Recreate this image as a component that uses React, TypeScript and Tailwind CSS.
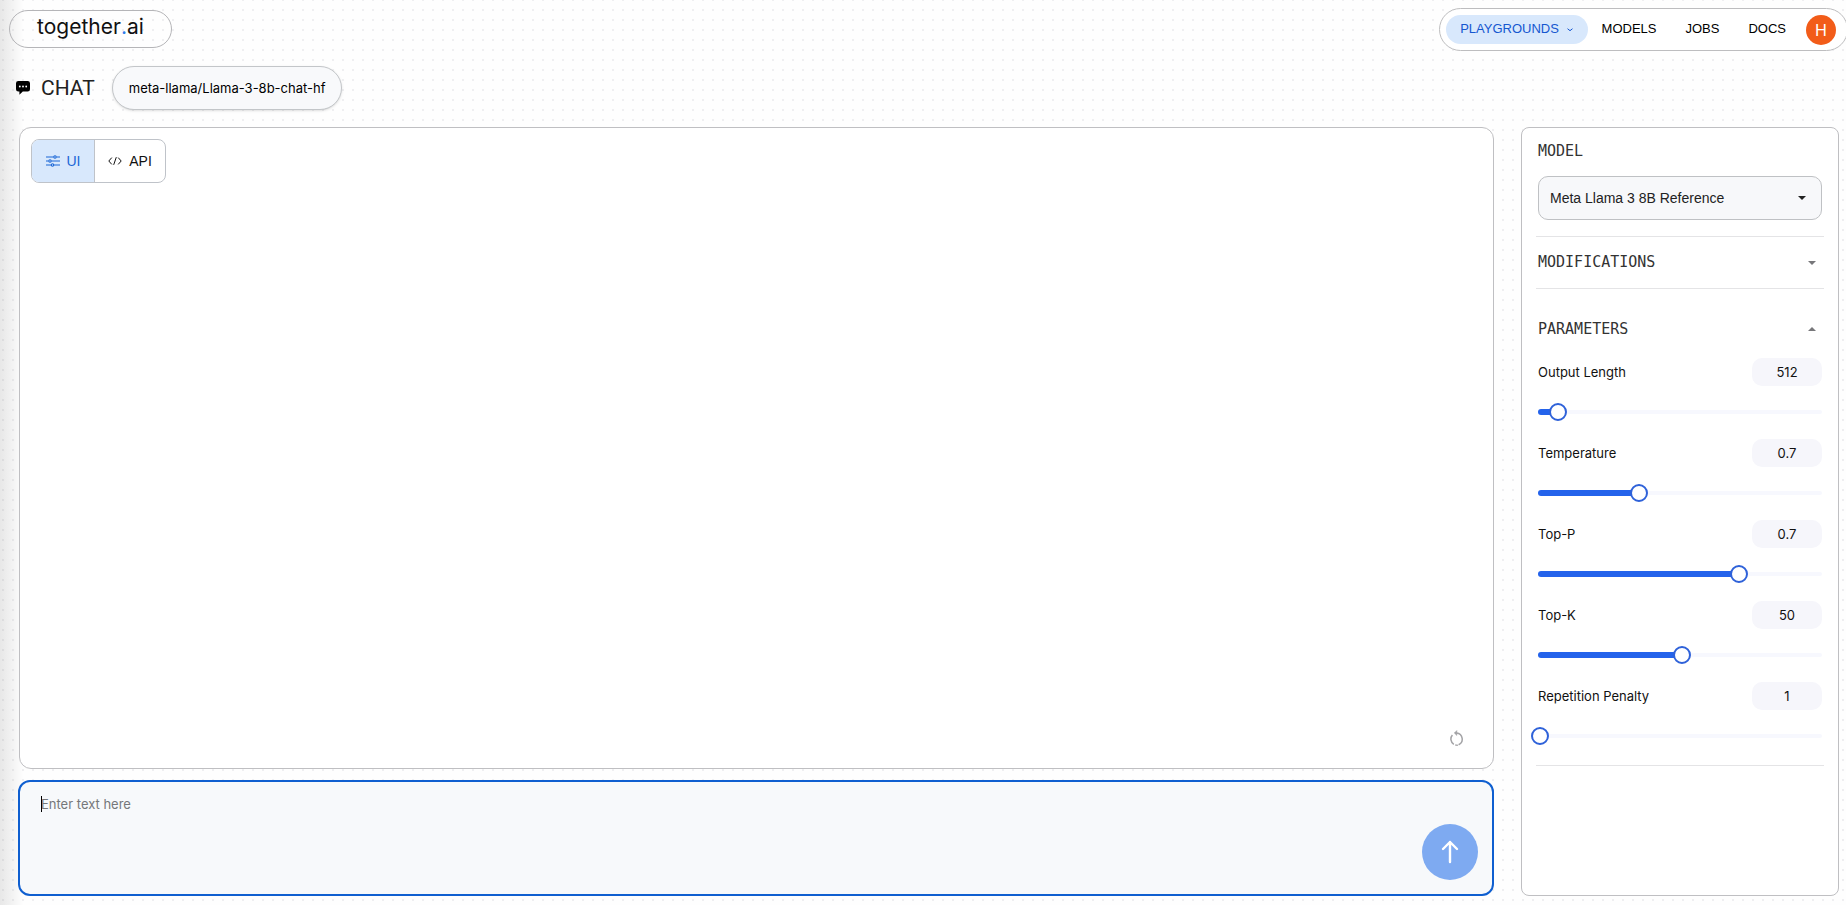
import { useState } from "react";

type Parameter = {
  id: string;
  label: string;
  value: number;
  min: number;
  max: number;
  step: number;
};

const initialParameters: Parameter[] = [
  { id: "output-length", label: "Output Length", value: 512, min: 0, max: 8192, step: 1 },
  { id: "temperature", label: "Temperature", value: 0.7, min: 0, max: 2, step: 0.1 },
  { id: "top-p", label: "Top-P", value: 0.7, min: 0, max: 1, step: 0.1 },
  { id: "top-k", label: "Top-K", value: 50, min: 0, max: 100, step: 1 },
  { id: "repetition-penalty", label: "Repetition Penalty", value: 1, min: 1, max: 2, step: 0.1 }
];

const navLinks = ["MODELS", "JOBS", "DOCS"];

function ChatIcon() {
  return (
    <svg viewBox="0 0 14 14" className="h-[14px] w-[14px] shrink-0" aria-hidden="true">
      <path d="M2.3 0h9.4A2.3 2.3 0 0 1 14 2.3v6A2.3 2.3 0 0 1 11.7 10.6H6.8L3.4 13.8v-3.2H2.3A2.3 2.3 0 0 1 0 8.3v-6A2.3 2.3 0 0 1 2.3 0Z" fill="#000" />
      <circle cx="3.8" cy="5.5" r="0.9" fill="#fff" />
      <circle cx="7" cy="5.5" r="0.9" fill="#fff" />
      <circle cx="10.2" cy="5.5" r="0.9" fill="#fff" />
    </svg>
  );
}

function SlidersIcon() {
  return (
    <svg viewBox="0 0 14 12" className="h-3 w-[14px]" fill="none" stroke="currentColor" strokeWidth="1.1" aria-hidden="true">
      <path d="M0 2h7.6M10.4 2H14M0 6h2.6M5.4 6H14M0 10h5.1M7.9 10H14" />
      <circle cx="9" cy="2" r="1.2" />
      <circle cx="4" cy="6" r="1.2" />
      <circle cx="6.5" cy="10" r="1.2" />
    </svg>
  );
}

function CodeIcon() {
  return (
    <svg viewBox="0 0 14 10" className="h-[10px] w-[14px]" fill="none" stroke="currentColor" strokeWidth="1" aria-hidden="true">
      <path d="M3.8 1.6.8 5l3 3.4M10.2 1.6l3 3.4-3 3.4M8.3 1.2 5.7 8.8" />
    </svg>
  );
}

function Caret({ up = false }: { up?: boolean }) {
  return (
    <svg viewBox="0 0 8 4" className="h-1 w-2" fill="currentColor" aria-hidden="true">
      <path d={up ? "M0 4 4 0l4 4Z" : "M0 0h8L4 4Z"} />
    </svg>
  );
}

function ParameterSlider({ parameter, onChange }: { parameter: Parameter; onChange: (value: number) => void }) {
  const { id, label, value, min, max, step } = parameter;
  const percent = ((value - min) / (max - min)) * 100;

  return (
    <div className="h-[81px] text-[13px]">
      <div className="flex items-center justify-between">
        <label htmlFor={id}>{label}</label>
        <input
          type="text"
          aria-label={`${label} value`}
          value={value}
          onChange={(event) => onChange(Number(event.target.value) || min)}
          className="h-7 w-[70px] rounded-[10px] bg-[#f6f6fb] text-center outline-none"
        />
      </div>
      <div className="relative mt-[17px] flex h-[18px] items-center">
        <div className="h-1 w-full rounded-full bg-[#f7f8fe]">
          <div className="-mt-px h-[6px] rounded-full bg-[#2463eb]" style={{ width: `${percent}%` }} />
        </div>
        <input
          id={id}
          type="range"
          min={min}
          max={max}
          step={step}
          value={value}
          onChange={(event) => onChange(Number(event.target.value))}
          className="absolute -left-[7px] h-[18px] w-[calc(100%+18px)] cursor-pointer appearance-none bg-transparent [&::-webkit-slider-thumb]:size-[18px] [&::-webkit-slider-thumb]:appearance-none [&::-webkit-slider-thumb]:rounded-full [&::-webkit-slider-thumb]:border-2 [&::-webkit-slider-thumb]:border-[#2f62d9] [&::-webkit-slider-thumb]:bg-white"
        />
      </div>
    </div>
  );
}

export default function App() {
  const [parameters, setParameters] = useState(initialParameters);
  const [text, setText] = useState("");

  const updateParameter = (id: string, value: number) => {
    setParameters((current) => current.map((item) => (item.id === id ? { ...item, value } : item)));
  };

  return (
    <div className="flex min-h-screen flex-col overflow-x-hidden bg-[#fefefe] bg-[radial-gradient(circle,#efeff1_1px,transparent_1px)] bg-[size:10px_10px] bg-[position:8px_5px] font-['Inter',sans-serif] text-sm text-[#111]">
      <div className="flex grow flex-col bg-[linear-gradient(to_right,rgba(0,0,0,0.09),transparent_24px)] pb-[9px]">
        <header className="-mr-[2px] flex items-start justify-between pt-2 pl-[9px]">
          <a href="#" className="mt-[2px] flex h-[38px] w-[163px] items-center justify-center rounded-full border border-[#b5b5b8] pb-1 text-[21px] text-[#111]">
            together<span className="text-[#2f7de8]">.</span>ai
          </a>
          <nav className="flex h-[43px] items-center rounded-full border border-[#bdbdbf] bg-white pr-[11px] pl-[6px] font-['Liberation_Sans',sans-serif] text-[13px] text-black">
            <button type="button" className="flex h-[29px] w-[142px] items-center justify-center gap-2 rounded-full bg-[#d8e8fc] text-[#1557d0]">
              PLAYGROUNDS
              <svg viewBox="0 0 6 4" className="h-1 w-[6px]" fill="none" stroke="currentColor" aria-hidden="true">
                <path d="m.5.7 2.5 2 2.5-2" />
              </svg>
            </button>
            <div className="flex gap-[29px] px-[14px]">
              {navLinks.map((link) => (
                <a key={link} href="#">{link}</a>
              ))}
            </div>
            <button type="button" className="ml-[6px] size-[30px] rounded-full bg-[#f25c19] font-['Inter',sans-serif] text-base text-white">H</button>
          </nav>
        </header>

        <div className="mt-[15px] flex h-11 items-center pl-4">
          <ChatIcon />
          <h1 className="ml-[11px] font-['Roboto',sans-serif] text-[21px] text-[#222]">CHAT</h1>
          <button type="button" className="ml-[17px] h-11 rounded-full border border-[#c3c6c9] bg-[#f8f9fb] px-4 text-[13px] text-black shadow-sm">
            meta-llama/Llama-3-8b-chat-hf
          </button>
        </div>

        <main className="mt-[17px] mr-[7px] ml-[18px] flex grow gap-[27px]">
          <div className="flex grow flex-col gap-[11px]">
            <section className="ml-px flex grow flex-col justify-between rounded-xl border border-[#bfbfc2] bg-white p-[11px]">
              <div className="flex h-11 self-start overflow-hidden rounded-lg border border-[#bfc3c9] font-['Liberation_Sans',sans-serif]">
                <button type="button" className="flex w-[63px] items-center justify-center gap-[7px] border-r border-[#bfc3c9] bg-[#d8e8fc] text-[#1a66d6]">
                  <SlidersIcon />
                  UI
                </button>
                <button type="button" className="flex w-[70px] items-center justify-center gap-[7px] text-[#111]">
                  <CodeIcon />
                  API
                </button>
              </div>
              <button type="button" aria-label="Reset chat" className="mr-[18px] mb-[11px] self-end text-[#a3a3a6]">
                <svg viewBox="0 0 14 16" className="h-4 w-[14px]" fill="none" stroke="currentColor" strokeWidth="1.5" aria-hidden="true">
                  <path d="M4.8 3h1.8a6.2 6.2 0 0 1 2 11.8M7.8 15.2a6.2 6.2 0 0 1-2.6-.3M3.8 14.3A6.2 6.2 0 0 1 2.4 5" />
                  <path d="M6.8.6 4.4 3l2.4 2.4Z" fill="currentColor" strokeWidth="0.6" />
                </svg>
              </button>
            </section>

            <form className="relative flex h-[116px] rounded-xl border-2 border-[#0f5fd0] bg-[#f7f9fb] pr-[14px] pl-[21px]" onSubmit={(event) => event.preventDefault()}>
              {text === "" ? <span className="pointer-events-none absolute top-[14px] left-[21px] h-4 w-px bg-black" /> : null}
              <textarea
                aria-label="Message"
                placeholder="Enter text here"
                value={text}
                onChange={(event) => setText(event.target.value)}
                className="mt-3 grow resize-none bg-transparent text-[13px] leading-5 outline-none placeholder:text-[#75777a]"
              />
              <button type="submit" aria-label="Send message" className="mb-[14px] flex size-14 items-center justify-center self-end rounded-full bg-[#7eaaf1] text-white">
                <svg viewBox="0 0 18 24" className="h-6 w-[18px]" fill="none" stroke="currentColor" strokeWidth="2.4" strokeLinecap="round" strokeLinejoin="round" aria-hidden="true">
                  <path d="M9 22V2M2 9l7-7 7 7" />
                </svg>
              </button>
            </form>
          </div>

          <aside className="w-[318px] shrink-0 rounded-lg border border-[#bfbfc2] bg-white px-[14px]">
            <div className="h-[109px] border-b border-[#e4e4e6] px-[2px] pt-[13px]">
              <label htmlFor="model" className="block font-['DejaVu_Sans_Mono',monospace] text-[15px] leading-5 text-[#333]">MODEL</label>
              <div className="relative mt-[15px]">
                <select id="model" className="h-11 w-full appearance-none rounded-[10px] border border-[#bfc1c4] bg-[#f7f8fa] px-[11px] font-['Liberation_Sans',sans-serif] text-[#222]">
                  <option>Meta Llama 3 8B Reference</option>
                </select>
                <span className="pointer-events-none absolute inset-y-0 right-4 flex items-center text-[#222]"><Caret /></span>
              </div>
            </div>
            <button type="button" className="flex h-[52px] w-full items-center justify-between border-b border-[#e4e4e6] pr-2 pl-[2px] font-['DejaVu_Sans_Mono',monospace] text-[15px] text-[#333]">
              MODIFICATIONS
              <span className="text-[#77777a]"><Caret /></span>
            </button>
            <div className="border-b border-[#e4e4e6] pt-[30px] pb-[2px]">
              <button type="button" className="flex w-full items-center justify-between pr-2 pl-[2px] font-['DejaVu_Sans_Mono',monospace] text-[15px] leading-5 text-[#333]">
                PARAMETERS
                <span className="text-[#77777a]"><Caret up /></span>
              </button>
              <div className="px-[2px] pt-[19px]">
                {parameters.map((parameter) => (
                  <ParameterSlider key={parameter.id} parameter={parameter} onChange={(value) => updateParameter(parameter.id, value)} />
                ))}
              </div>
            </div>
          </aside>
        </main>
      </div>
    </div>
  );
}
